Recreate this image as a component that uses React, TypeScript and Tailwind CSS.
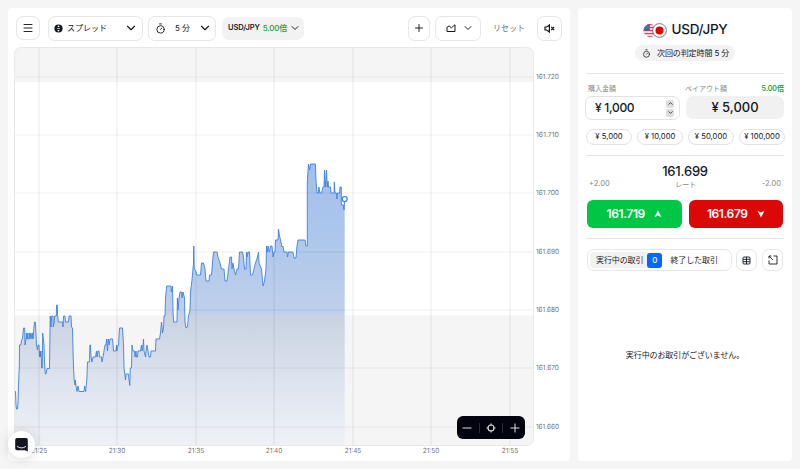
import React from "react";
import { ChevronDown, ChevronUp, Menu, Minus, Plus, Timer } from "lucide-react";

const TIME_TICKS = [
  { x: 39, label: "21:25" },
  { x: 117, label: "21:30" },
  { x: 196, label: "21:35" },
  { x: 274, label: "21:40" },
  { x: 353, label: "21:45" },
  { x: 431, label: "21:50" },
  { x: 510, label: "21:55" },
];

const PRICE_TICKS = [
  { y: 77, label: "161.720" },
  { y: 135, label: "161.710" },
  { y: 193, label: "161.700" },
  { y: 252, label: "161.690" },
  { y: 310, label: "161.680" },
  { y: 368, label: "161.670" },
  { y: 427, label: "161.660" },
];

const PRICE_LINE =
  "14,391.5 15.5,391.5 16,405 16.5,409 17.5,409 18,403 18.7,380 19.3,368 19.5,345 21,345 21.5,340 22.5,339 23.5,328 24.7,328 25,345 26,339 26.5,333 27,339 28,333 28,339 29,339 29.5,333 30,339 31,333 32,339 32.5,333 33,339 34,327 34.5,322 35.3,322 36,333 36.5,345 37.5,350 38,345 39,345 39.5,357 40,351 40.5,357 41,351 41.7,368 42.3,368 42.7,333 44,345 44.5,362 45.3,374 46,374 47,368.5 49.5,368.5 50.2,316 51,327 51.7,316 53,316 53.3,327 54.3,322 54.6,316 56.3,316 56.6,305 57.3,305 57.6,316 58.3,322 62.5,322 63,327 63.6,316 65,316 65.5,322 68.5,322 69,316 71,316 71.5,327 72.5,328 73,350 73.5,368 74.2,380 75,385 75.3,380 76,386 77,391.5 78,386 79,391.5 84,391.5 84.6,386 85.6,391.5 86.8,380 87.5,362 89.5,362 89.9,345 90.4,345 91,357 92,362 93,357 95.5,357 96.5,351 97,357 98,351 99,351 99.5,357 101.5,357 102,362 103,357 104,351 105,345 106,345 106.6,339 107.5,351 108.2,339 109,345 110,339 112.5,339 113.5,351 116,351 116.5,345 117,351 118,345 118.5,345 119.5,328 122.5,328 123.5,345 124,368 124.8,374 125.5,380 126,374 128.5,374 129,380 129.8,385.5 130.3,368 131.5,368 132,345 133,351 134.5,351 135,357 136,351 136.5,357 137.5,357 138,351 140.5,351 141.5,345 142,351 143,345 143.5,339 144,351 145.5,357 146,351 147,345 148,351 149,357 150.5,357 151,351 155.5,351 156,339 159.5,339 160.5,333 161.5,322 162.5,333 163.5,328 164,316 165,316 165.5,298 166.7,286 171,286 171.3,292 172.5,286 173,310 173.5,322 177,322 177.4,298 178,310 179,298 180,292 181.5,292 182,298 183,292 184.5,298 185,322 186,328 187.5,327 188.5,316 190,310 190.5,292 192,280 193.5,263 193.8,246 194.3,269 196,271 196.5,275 200.5,275 201.5,263 203.5,263 205,269 206,281 209,281 209.5,275 211.5,275 213,257 213.5,252 217,252 218,257 220,263 221.5,269 224,269 225,281 227,281 228.5,269 230,257 231.5,257 232,269 233,263 234,269 235.5,275 237,269 238.5,269 239.5,252 242.5,252 243.5,257 244.5,269 246,269 246.5,252 247,257 248,252 249.5,252 250.5,275 252.5,275 254,269 255.5,263 257.5,257 258.5,252 259,263 261.5,269 263,286 264.5,281 266,269 266.5,246 267.5,252 268,246 269.5,252 270.5,246 272,246 273,257 274,252 275,252 275.5,240 278,240 278.5,229 279.5,236 280.5,240 282,247 283,246 284,252 287,252 287.5,257 288.5,252 293,252 294,258 296,258 297,246 298,240 305,240 306,246 307.3,246 307.3,181 308.5,164 309.5,170 310.5,164 315.5,164 316,181 317,193 318.5,193 318.8,187 320,193 321.5,193 323,187 324,187 324.5,170 325.3,187 326.5,170 327.3,187 328,181 328.5,187 330.5,187 331,193 334,193 334.3,182 335,193 336.5,193 337,199 337.4,193 339.5,193 340,187 341.3,187 341.3,205 343.5,205 344,210 344.7,199";

const AMOUNTS = ["¥ 5,000", "¥ 10,000", "¥ 50,000", "¥ 100,000"];

const App: React.FC = () => (
  <div className="relative flex h-[469px] w-[800px] gap-2 overflow-hidden bg-[#f5f5f5] p-2 font-['Inter','Noto_Sans_CJK_JP',sans-serif] text-[#15171f]">
    <section className="flex w-[562px] flex-col rounded bg-white">
      <Toolbar />
      <Chart />
    </section>
    <TradePanel />

    {/* Zoom controls */}
    <div className="absolute left-[457px] top-[416px] flex h-[23px] w-[68px] items-center justify-around rounded-md bg-[#02030f] text-[#e3e3e3]">
      <Minus size={14} strokeWidth={1.7} />
      <span className="h-2.5 w-px bg-[#2b2c38]" />
      <svg width="10" height="10" viewBox="0 0 10 10" fill="none" stroke="currentColor" strokeWidth="1.1">
        <circle cx="5" cy="5" r="3" />
        <path d="M5 .5v2M5 7.5v2M.5 5h2M7.5 5h2" />
      </svg>
      <span className="h-2.5 w-px bg-[#2b2c38]" />
      <Plus size={14} strokeWidth={1.7} />
    </div>

    {/* Chat launcher */}
    <button className="absolute left-2 top-[431px] flex h-[27px] w-[27px] items-center justify-center rounded-full bg-white shadow-[0_1px_12px_rgba(0,0,0,0.16)]">
      <svg width="13" height="14" viewBox="0 0 13 14">
        <path d="M2 0h9a1.8 1.8 0 0 1 1.8 1.8V13.6L10 12.3H2A1.8 1.8 0 0 1 .2 10.5V1.8A1.8 1.8 0 0 1 2 0Z" fill="#15151f" />
        <path d="M2.4 8.6Q6.5 11.4 10.6 8.6" fill="none" stroke="#fff" strokeWidth=".9" strokeLinecap="round" />
      </svg>
    </button>
  </div>
);

export default App;

const Toolbar: React.FC = () => (
  <div className="flex h-[39px] items-center px-2 pt-px text-[8px]">
    <button className="flex h-6 w-6 items-center justify-center rounded-[7px] border border-[#e6e6e6]">
      <Menu size={12} strokeWidth={1.9} />
    </button>
    <button className="ml-2 flex h-[25px] w-[95px] items-center rounded-[7px] border border-[#e6e6e6] pl-[5px] pr-1">
      <svg width="9" height="9" viewBox="0 0 9 9">
        <circle cx="4.5" cy="4.5" r="4.1" fill="#15171f" />
        <path d="M4.5 1.3 5.7 3H3.3ZM4.5 7.7 3.3 6h2.4Z" fill="#fff" />
        <path d="M3 4.5h3" stroke="#fff" strokeWidth=".7" />
      </svg>
      <span className="ml-1 pb-px">スプレッド</span>
      <ChevronDown size={14} strokeWidth={1.9} className="ml-auto" />
    </button>
    <button className="ml-[5px] flex h-[25px] w-[68px] items-center rounded-[7px] border border-[#e6e6e6] pl-1.5 pr-[3px]">
      <Timer size={11} strokeWidth={2} />
      <span className="ml-[9px] pb-px">5 分</span>
      <ChevronDown size={14} strokeWidth={1.9} className="ml-auto" />
    </button>
    <button className="ml-1.5 flex h-[23px] w-[82px] items-center whitespace-nowrap rounded-[7px] bg-[#f2f2f2] pl-1.5 pr-[3px]">
      <span className="text-[7.5px] font-semibold tracking-[-0.1px]">USD/JPY</span>
      <span className="ml-[3px] font-medium tracking-[-0.2px] text-[#18a048]">5.00倍</span>
      <ChevronDown size={12} strokeWidth={1.9} className="ml-auto" />
    </button>

    <button className="ml-auto flex h-[25px] w-[22px] items-center justify-center rounded-[7px] border border-[#e6e6e6]">
      <Plus size={12} strokeWidth={1.9} />
    </button>
    <button className="ml-[5px] flex h-[25px] w-[46px] items-center justify-between rounded-[7px] border border-[#e6e6e6] pl-2.5 pr-1.5">
      <svg width="10" height="10" viewBox="0 0 10 10" fill="none" stroke="#15171f" strokeWidth="1">
        <path d="M1 8.5V4.2L3.2 3 5.3 4.8 9 1.8V8.5Z" />
      </svg>
      <ChevronDown size={12} strokeWidth={1.9} />
    </button>
    <button className="ml-3 w-8 whitespace-nowrap pb-px text-[#6b7280]">リセット</button>
    <button className="ml-3 flex h-[25px] w-[25px] items-center justify-center rounded-[7px] border border-[#e6e6e6]">
      <svg width="11" height="9" viewBox="0 0 11 9" fill="none" stroke="#15171f" strokeWidth="1.2">
        <path d="M1 3h1.7L5.4 1v7L2.7 6H1ZM7.2 3l2.9 3M10.1 3 7.2 6" />
      </svg>
    </button>
  </div>
);

const Chart: React.FC = () => (
  <svg className="ml-1.5 block" width="550" height="410" viewBox="14 47 550 410">
    <defs>
      <linearGradient id="area" gradientUnits="userSpaceOnUse" x1="0" y1="164" x2="0" y2="446">
        <stop offset="0" stopColor="#a1c0ee" />
        <stop offset=".24" stopColor="#acc6ec" />
        <stop offset=".537" stopColor="#bfd0eb" />
        <stop offset=".537" stopColor="#c9d2e1" />
        <stop offset=".76" stopColor="#dce3ef" />
        <stop offset="1" stopColor="#eff1f6" />
      </linearGradient>
      <clipPath id="plot">
        <rect x="14" y="47" width="520" height="399" rx="7" />
      </clipPath>
    </defs>

    <g clipPath="url(#plot)">
      <rect x="14" y="47" width="520" height="35" fill="#f5f5f5" />
      <rect x="14" y="315.5" width="520" height="131" fill="#f5f5f5" />
      <polygon points={`14,446 ${PRICE_LINE} 344.7,446`} fill="url(#area)" />
      <g stroke="#000" strokeOpacity=".065" strokeWidth="1.2">
        {TIME_TICKS.map((t) => (
          <line key={t.label} x1={t.x} x2={t.x} y1="47" y2="446" />
        ))}
        {PRICE_TICKS.map((t) => (
          <line key={t.label} x1="14" x2="534" y1={t.y} y2={t.y} />
        ))}
      </g>
      <polyline points={PRICE_LINE} fill="none" stroke="#3f80db" strokeWidth=".9" strokeLinejoin="round" />
    </g>
    <rect x="14.5" y="47.5" width="519" height="398" rx="7" fill="none" stroke="#e8e8e8" />
    <circle cx="344.7" cy="199" r="2.5" fill="#fff" stroke="#2f7df0" strokeWidth="1.2" />

    <g fill="#757575" fontSize="7" textRendering="geometricPrecision">
      {TIME_TICKS.map((t) => (
        <text key={t.label} x={t.x} y="452.5" textAnchor="middle" textLength="16.5" lengthAdjust="spacingAndGlyphs">
          {t.label}
        </text>
      ))}
      {PRICE_TICKS.map((t) => (
        <text key={t.label} x="536" y={t.y + 2.3} textLength="23" lengthAdjust="spacingAndGlyphs">
          {t.label}
        </text>
      ))}
    </g>
  </svg>
);

const TradePanel: React.FC = () => (
  <section className="flex w-[214px] flex-col rounded bg-white px-2">
    <div className="flex h-[37px] items-end justify-center">
      <div className="flex h-[30px] items-center gap-[5px]">
        <Flags />
        <h1 className="text-[13.5px] font-medium leading-none tracking-[-0.3px]">USD/JPY</h1>
      </div>
    </div>
    <div className="mx-auto flex h-4 w-[100px] items-center whitespace-nowrap rounded-full bg-[#f2f2f2] pl-[7px] text-[8px]">
      <Timer size={9} strokeWidth={2} />
      <span className="ml-1.5 tracking-[-0.1px]">次回の判定時間 5 分</span>
    </div>
    <hr className="mt-3 border-[#e5e5e5]" />

    <div className="mt-[9px] flex h-2.5 items-center text-[7px] leading-none text-[#8a8a8a]">
      <span className="ml-0.5 w-[97px]">購入金額</span>
      <span>ペイアウト額</span>
      <span className="ml-auto font-semibold text-[#18a048]">5.00倍</span>
    </div>
    <div className="-ml-px mt-[3px] flex gap-1.5">
      <div className="flex h-6 w-[95px] items-center justify-between rounded-[7px] border border-[#e2e2e2] pl-[9px] pr-[5px]">
        <span className="text-[12px] font-medium tracking-[-0.3px]">¥ 1,000</span>
        <span className="flex flex-col gap-px">
          <span className="flex h-2 w-2 items-center justify-center rounded-xs bg-[#dedede]">
            <ChevronUp size={7} strokeWidth={2.5} />
          </span>
          <span className="flex h-2 w-2 items-center justify-center rounded-xs bg-[#dedede]">
            <ChevronDown size={7} strokeWidth={2.5} />
          </span>
        </span>
      </div>
      <div className="flex h-[23px] w-[98px] items-center justify-center rounded-[7px] bg-[#f1f1f1] text-[13px] font-medium">
        ¥ 5,000
      </div>
    </div>
    <div className="-mr-px mt-[9px] flex justify-between">
      {AMOUNTS.map((amount) => (
        <button
          key={amount}
          className="flex h-4 w-[46px] items-center justify-center whitespace-nowrap rounded-full border border-[#e2e2e2] text-[7.7px]"
        >
          {amount}
        </button>
      ))}
    </div>
    <hr className="mt-2.5 border-[#e5e5e5]" />

    <div className="mt-2 text-center text-[13px] font-medium leading-[15px] tracking-[-0.2px]">161.699</div>
    <div className="mt-px flex h-2 items-center justify-between px-[3px] text-[7.5px] leading-none text-[#858585]">
      <span>+2.00</span>
      <span className="text-[7px]">レート</span>
      <span>-2.00</span>
    </div>
    <div className="mt-3 flex gap-[7px] px-px text-[12px] font-semibold tracking-[-0.4px] text-white">
      <button className="flex h-7 w-[95px] items-center justify-center gap-[9px] rounded-md bg-[#00c646]">
        161.719
        <svg width="8" height="8" viewBox="0 0 8 8" fill="currentColor">
          <path d="M4 .5 7.5 7.2 4 5.5 .5 7.2Z" />
        </svg>
      </button>
      <button className="flex h-7 w-[95px] items-center justify-center gap-[9px] rounded-md bg-[#dc0808]">
        161.679
        <svg width="8" height="8" viewBox="0 0 8 8" fill="currentColor">
          <path d="M4 7.5 .5 .8 4 2.5 7.5 .8Z" />
        </svg>
      </button>
    </div>
    <hr className="mt-2.5 border-[#e5e5e5]" />

    <div className="mt-2.5 flex items-center px-px">
      <div className="flex h-[22px] w-[145px] items-center whitespace-nowrap rounded-[7px] border border-[#e6e6e6] pl-0.5 text-[8px]">
        <div className="flex h-4 items-center rounded bg-[#f2f2f2] pl-1.5 tracking-[-0.1px]">
          実行中の取引
          <span className="ml-1 flex h-[15px] w-[15px] items-center justify-center rounded-[3px] bg-[#0468fb] font-medium text-white">
            0
          </span>
        </div>
        <span className="ml-2 tracking-[-0.1px]">終了した取引</span>
      </div>
      <button className="ml-1 flex h-[22px] w-[21px] items-center justify-center rounded-[7px] border border-[#e6e6e6]">
        <svg width="9" height="9" viewBox="0 0 9 9" fill="none" stroke="#15171f" strokeWidth=".9">
          <rect x="1" y="1" width="7" height="7" rx="1" />
          <path d="M1 3.3h7M1 5.7h7M4.5 1v7" />
        </svg>
      </button>
      <button className="ml-[5px] flex h-[22px] w-[21px] items-center justify-center rounded-[7px] border border-[#e6e6e6]">
        <svg width="10" height="10" viewBox="0 0 10 10" fill="none" stroke="#15171f" strokeWidth=".9">
          <path d="M1 3.5V1h2.5M1 1l4 4M5.500 1H9v8H1V5.500" />
        </svg>
      </button>
    </div>

    <p className="mt-[78px] text-center text-[8px] tracking-[-0.1px]">実行中のお取引がございません。</p>
  </section>
);

const Flags: React.FC = () => (
  <svg width="24" height="15" viewBox="0 0 24 15">
    <defs>
      <clipPath id="us">
        <circle cx="7" cy="7.5" r="6.5" />
      </clipPath>
    </defs>
    <g clipPath="url(#us)">
      <rect width="14" height="15" fill="#fff" />
      {[1, 4, 7, 10, 13].map((y) => (
        <rect key={y} y={y - 0.2} width="14" height="1.5" fill="#e0405a" />
      ))}
      <rect width="7" height="7.5" fill="#44619d" />
      <path d="M1 3h6M1 5h6" stroke="#b9c5de" strokeWidth=".6" strokeDasharray=".8 1" />
    </g>
    <circle cx="16.5" cy="7.5" r="6.9" fill="#fff" stroke="#444" strokeWidth=".7" />
    <circle cx="16.5" cy="7.5" r="4" fill="#e00000" />
  </svg>
);
